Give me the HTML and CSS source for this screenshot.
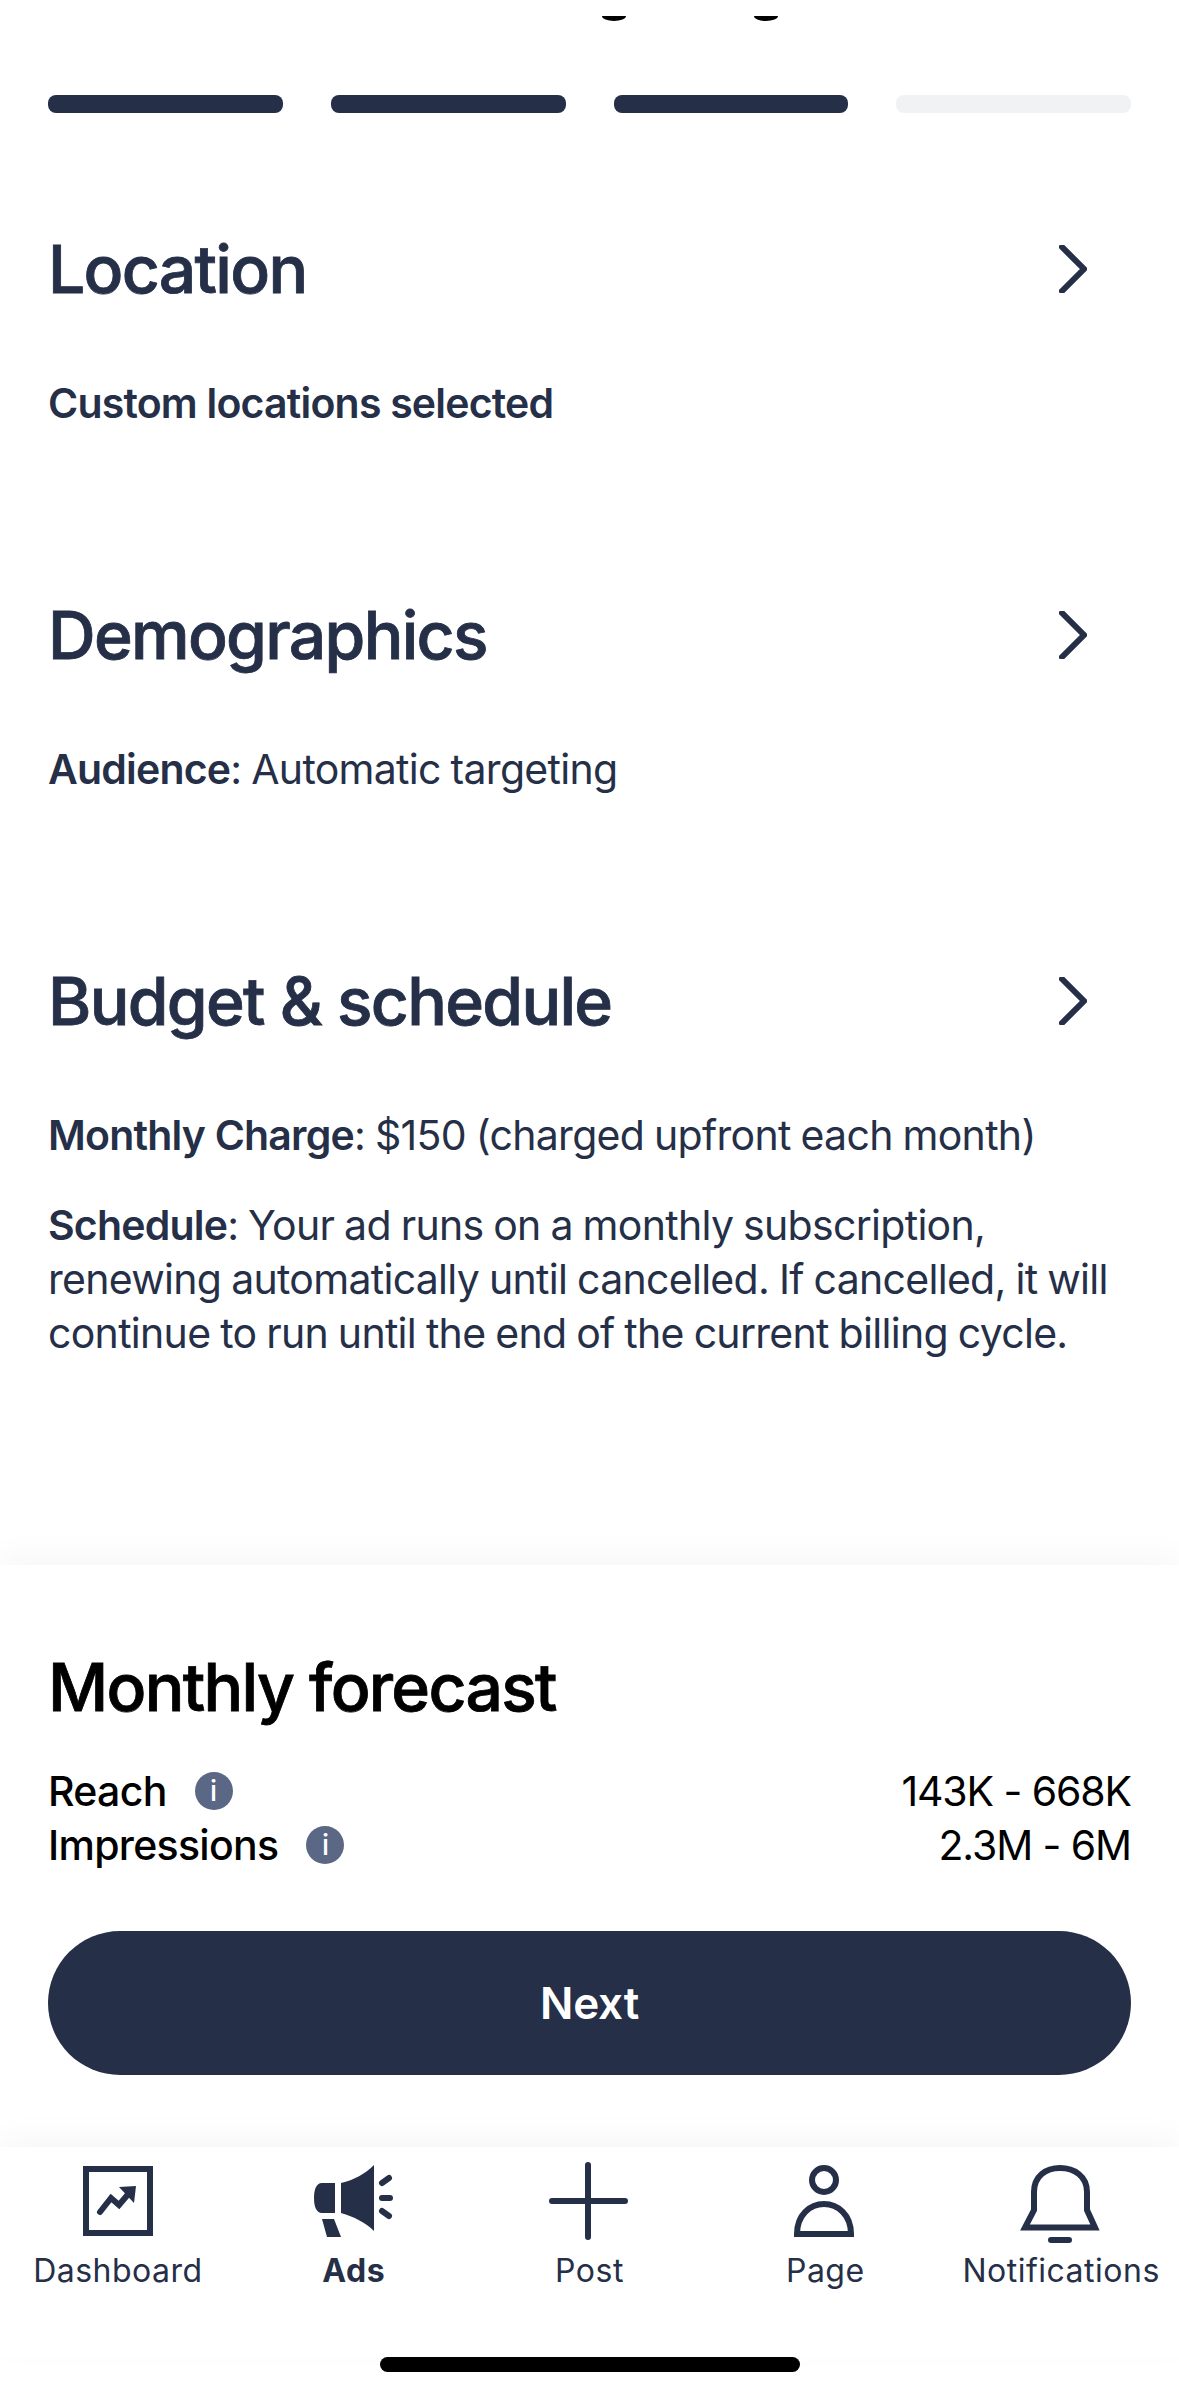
FILE: index.html

```html
<!DOCTYPE html>
<html>
<head>
  <meta charset="UTF-8">
  <title>Ad review</title>
  <meta name="viewport" content="width=device-width,initial-scale=1.0">
  <link rel="stylesheet" href="styles.css">
</head>
<body>
  <div class="page">
    <div class="topcaps"><span class="cap"></span><span class="cap"></span></div>

    <div class="progress">
      <div class="step done"></div>
      <div class="step done"></div>
      <div class="step done"></div>
      <div class="step"></div>
    </div>

    <div class="sections">
      <div class="section">
        <div class="section-head">
          <h2>Location</h2>
          <svg class="chevron" viewBox="0 0 28 48"><path d="M3 2 L25 24 L3 46"/></svg>
        </div>
        <p><b>Custom locations selected</b></p>
      </div>
      <div class="section">
        <div class="section-head">
          <h2>Demographics</h2>
          <svg class="chevron" viewBox="0 0 28 48"><path d="M3 2 L25 24 L3 46"/></svg>
        </div>
        <p><b>Audience</b>: Automatic targeting</p>
      </div>
      <div class="section">
        <div class="section-head">
          <h2>Budget &amp; schedule</h2>
          <svg class="chevron" viewBox="0 0 28 48"><path d="M3 2 L25 24 L3 46"/></svg>
        </div>
        <p><b>Monthly Charge</b>: $150 (charged upfront each month)</p>
        <p><b>Schedule</b>: Your ad runs on a monthly subscription,<br>renewing automatically until cancelled. If cancelled, it will<br>continue to run until the end of the current billing cycle.</p>
      </div>
    </div>

    <div class="forecast">
      <h3>Monthly forecast</h3>
      <div class="stat">
        <span class="stat-name">Reach <i class="info">i</i></span>
        <span>143K - 668K</span>
      </div>
      <div class="stat">
        <span class="stat-name">Impressions <i class="info">i</i></span>
        <span>2.3M - 6M</span>
      </div>
      <div class="next">Next</div>
    </div>

    <div class="tabbar">
      <div class="tab">
        <svg viewBox="0 0 80 80"><rect x="8" y="7" width="64" height="64" fill="none" stroke="#252f47" stroke-width="6"/><path d="M22 50 L33 36 L41 43 L52 30" fill="none" stroke="#252f47" stroke-width="6" stroke-linecap="round"/><path d="M41 25 L58 24 L56 41 Z" fill="#252f47"/></svg>
        <span>Dashboard</span>
      </div>
      <div class="tab active">
        <svg viewBox="0 0 80 80"><path d="M8 21 H21 V51 H8 C2 51 0 44 0 36 C0 28 2 21 8 21 Z" fill="#252f47"/><path d="M27 21 C40 18 51 12 60 3 V69 C51 60 40 55 27 51 Z" fill="#252f47"/><path d="M8 57 H20 L27 75 H13 Z" fill="#252f47"/><path d="M68 21 L75 16 M68 36 H76 M68 49 L75 54" stroke="#252f47" stroke-width="6" stroke-linecap="round"/></svg>
        <span>Ads</span>
      </div>
      <div class="tab">
        <svg viewBox="0 0 80 80"><path d="M39 3 V75 M3 39 H76" stroke="#252f47" stroke-width="6" stroke-linecap="round"/></svg>
        <span>Post</span>
      </div>
      <div class="tab">
        <svg viewBox="0 0 80 80"><circle cx="39" cy="18" r="12" fill="none" stroke="#252f47" stroke-width="6"/><path d="M12 72 C12 53 25 42 39 42 C53 42 66 53 66 72 Z" fill="none" stroke="#252f47" stroke-width="6"/></svg>
        <span>Page</span>
      </div>
      <div class="tab">
        <svg viewBox="0 0 80 80"><path d="M13 48 V30 C13 14 25 6 39 6 C53 6 66 14 66 30 V48 L74 65.5 H4 Z" fill="none" stroke="#252f47" stroke-width="6"/><path d="M30 78 H48" stroke="#252f47" stroke-width="6" stroke-linecap="round"/></svg>
        <span>Notifications</span>
      </div>
    </div>

    <div class="homebar"><div class="homebar-pill"></div></div>
  </div>
</body>
</html>
```

FILE: styles.css

```css
*{box-sizing:border-box;}
body{margin:0;background:#fff;color:#252f47;font-family:Inter,"Liberation Sans",sans-serif;}

.page{width:1179px;height:2396px;display:flex;flex-direction:column;overflow:hidden;position:relative;}

/* clipped bits of the status bar */
.topcaps{height:21px;padding:16px 0 0 602px;display:flex;gap:128px;}
.cap{width:24px;height:5px;background:#000;border-radius:0 0 12px 12px / 0 0 5px 5px;}

/* progress */
.progress{display:grid;grid-template-columns:repeat(4,1fr);gap:48px;padding:0 48px;margin-top:74px;}
.step{height:18px;border-radius:8px;background:#f1f2f4;}
.step.done{background:#252f47;}

/* sections */
.sections{height:1452px;padding:124px 48px 0;}
.section{min-height:366px;}
.section-head{height:64px;display:flex;align-items:center;justify-content:space-between;padding-right:44px;}
h2{margin:0;font-size:66px;font-weight:500;letter-spacing:-1.7px;line-height:64px;-webkit-text-stroke:.8px currentColor;}
.chevron{width:28px;height:48px;fill:none;stroke:#252f47;stroke-width:6;stroke-linecap:round;}
.section p{margin:0 0 36px;font-size:41px;line-height:54px;letter-spacing:-.7px;word-spacing:-1px;}
.section-head + p{margin-top:75px;}
.section b{font-weight:600;letter-spacing:-.8px;word-spacing:0;}

/* forecast panel */
.forecast{height:582px;padding:86px 48px 0;background:#fff;box-shadow:0 -10px 30px rgba(0,0,0,.035);color:#000;position:relative;}
h3{margin:0 0 41px;font-size:66px;font-weight:500;letter-spacing:-1.7px;line-height:72px;-webkit-text-stroke:.8px currentColor;}
.stat{display:flex;justify-content:space-between;font-size:41px;line-height:54px;letter-spacing:-1.1px;}
.stat-name{display:flex;align-items:center;gap:28px;font-weight:500;letter-spacing:-.7px;}
.info{width:38px;height:38px;border-radius:50%;background:#5a6785;color:#fff;font-style:normal;font-size:28px;line-height:38px;text-align:center;letter-spacing:0;}
.next{margin-top:59px;height:144px;border-radius:72px;background:#252f47;color:#fff;font-size:44px;font-weight:600;display:flex;align-items:center;justify-content:center;letter-spacing:-.2px;}

/* tab bar */
.tabbar{height:210px;display:grid;grid-template-columns:repeat(5,1fr);background:#fff;box-shadow:0 -10px 30px rgba(0,0,0,.035);position:relative;padding-top:15px;}
.tab{display:flex;flex-direction:column;align-items:center;font-size:32px;letter-spacing:.5px;}
.tab svg{width:80px;height:80px;overflow:visible;}
.tab span{margin-top:9px;line-height:40px;}
.tab.active span{font-weight:700;}

.homebar{position:absolute;top:2357px;left:0;width:1179px;display:flex;justify-content:center;}
.homebar-pill{width:420px;height:15px;border-radius:8px;background:#000;}
```
